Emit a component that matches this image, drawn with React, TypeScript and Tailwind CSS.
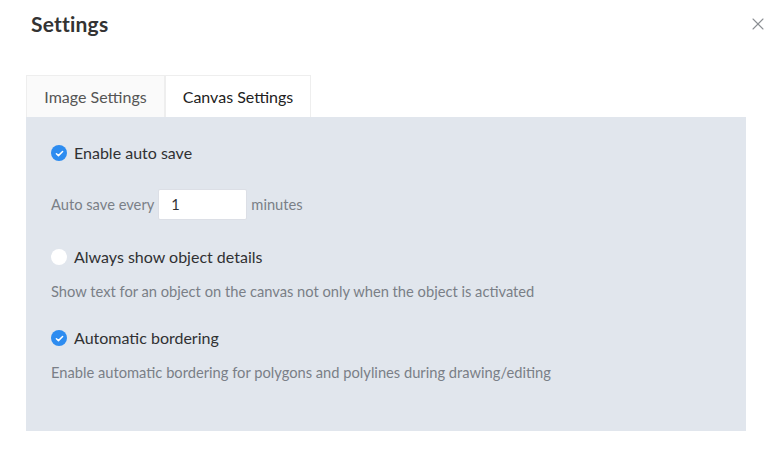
import { X } from 'lucide-react'

function CheckIcon({ checked }: { checked: boolean }) {
  if (!checked) {
    return <span className="block w-4 h-4 rounded-full bg-white shrink-0" />
  }
  return (
    <span className="flex w-4 h-4 rounded-full bg-[#2d8cf0] items-center justify-center shrink-0">
      <svg viewBox="0 0 16 16" className="w-[11px] h-[11px]" fill="none">
        <path d="M3.5 8.3l3 2.8 6-6" stroke="white" strokeWidth="2.2" strokeLinecap="round" strokeLinejoin="round" />
      </svg>
    </span>
  )
}

export default function App() {
  return (
    <div className="w-[780px] h-[450px] bg-white relative font-['Lato',sans-serif] text-[#303133]">
      <div className="flex items-center justify-between pl-[31px] pr-[12px] h-[48px]">
        <h1 className="text-[21px] font-bold text-[#333] tracking-[0.2px]">Settings</h1>
        <X className="w-[20px] h-[20px] text-[#8c8f94]" strokeWidth={1.3} />
      </div>

      <div className="ml-[26px] mt-[27px] w-[720px]">
        <div className="flex h-[42px]">
          <div className="w-[139px] flex items-center justify-center bg-[#fafafa] border border-b-0 border-[#eeeeee] text-[16px] text-[#555]">
            Image Settings
          </div>
          <div className="w-[146px] flex items-center justify-center bg-white border border-b-0 border-[#eeeeee] text-[16px] text-[#222]">
            Canvas Settings
          </div>
        </div>

        <div className="bg-[#e1e6ed] h-[314px] pl-[25px] pt-[28px]">
          <label className="flex items-center gap-[7px] text-[16px] text-[#303133] h-[16px]">
            <CheckIcon checked />
            Enable auto save
          </label>

          <div className="flex items-center mt-[28px] text-[14.7px] text-[#7a7f87]">
            <span>Auto save every</span>
            <div className="ml-[4px] w-[89px] h-[31px] bg-white border border-[#dcdfe6] rounded-[2px] flex items-center pl-[12px] text-[#303133]">
              1
            </div>
            <span className="ml-[4px]">minutes</span>
          </div>

          <label className="flex items-center gap-[7px] text-[16px] text-[#303133] mt-[29px] h-[16px]">
            <CheckIcon checked={false} />
            Always show object details
          </label>
          <p className="mt-[18px] text-[14.7px] text-[#7a7f87] leading-[16px]">
            Show text for an object on the canvas not only when the object is activated
          </p>

          <label className="flex items-center gap-[7px] text-[16px] text-[#303133] mt-[31px] h-[16px]">
            <CheckIcon checked />
            Automatic bordering
          </label>
          <p className="mt-[18px] text-[14.7px] text-[#7a7f87] leading-[16px]">
            Enable automatic bordering for polygons and polylines during drawing/editing
          </p>
        </div>
      </div>
    </div>
  )
}
